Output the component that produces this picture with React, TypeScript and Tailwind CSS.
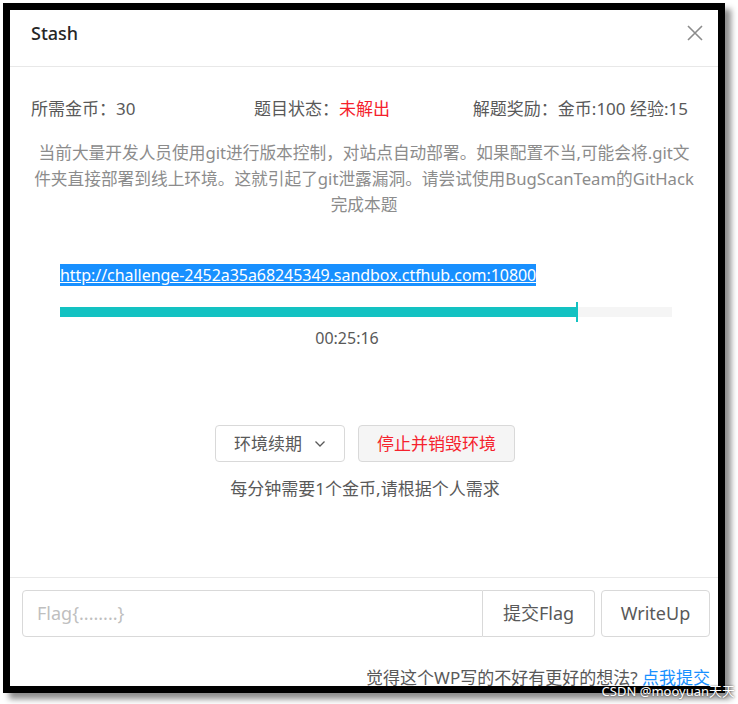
import React from "react";

const F = "font-[family-name:'Noto_Sans','Noto_Sans_CJK_SC',sans-serif]";

export default function App() {
  return (
    <div className={`relative w-[738px] h-[704px] bg-white overflow-hidden ${F}`}>
      <div className="ml-[3px] mt-[3px] w-[722px] h-[690px] border-[7px] border-black bg-white shadow-[6px_6px_6px_rgba(0,0,0,0.45)] overflow-hidden">
        <div className="flex flex-col w-[708px] h-[676px]">
          {/* header */}
          <div className="h-[57px] shrink-0 border-b border-[#e8e8e8] flex items-start justify-between pl-[21px] pr-[14px] pt-[11px]">
            <div className="text-[18px] leading-[24px] font-medium text-[#262626]">Stash</div>
            <svg width="18" height="18" viewBox="0 0 18 18" className="mt-[3px]">
              <path d="M2 2 L16 16 M16 2 L2 16" stroke="#8c8c8c" strokeWidth="1.6" fill="none" />
            </svg>
          </div>

          {/* body */}
          <div className="h-[511px] shrink-0 border-b border-[#e8e8e8] flex flex-col">
            <div className="grid grid-cols-3 pl-[21px] pr-[30px] pt-[30px] text-[17px] leading-[24px] text-[#595959]">
              <div>所需金币：30</div>
              <div className="pl-[4px]">
                题目状态：<span className="text-[#f5222d]">未解出</span>
              </div>
              <div className="text-right">解题奖励：金币:100 经验:15</div>
            </div>

            <div className="mt-[19px] text-center text-[16.7px] leading-[26px] text-[#8c8c8c]">
              <div>当前大量开发人员使用git进行版本控制，对站点自动部署。如果配置不当,可能会将.git文</div>
              <div>件夹直接部署到线上环境。这就引起了git泄露漏洞。请尝试使用BugScanTeam的GitHack</div>
              <div>完成本题</div>
            </div>

            <div className="mt-[46px] pl-[50px] h-[23px] leading-[23px]">
              <span className="bg-[#1890ff] text-white underline text-[16px] tracking-[-0.05px]">
                http://challenge-2452a35a68245349.sandbox.ctfhub.com:10800
              </span>
            </div>

            <div className="mt-[20px] ml-[50px] w-[612px] h-[10px] bg-[#f5f5f5] relative">
              <div className="h-full bg-[#13c2c2]" style={{ width: "84.3%" }} />
              <div className="absolute top-[-5px] h-[20px] w-[2px] bg-[#13c2c2]" style={{ left: "84.3%" }} />
            </div>

            <div className="mt-[11px] pl-[12px] pr-[46px] text-center text-[16px] leading-[20px] text-[#595959]">
              00:25:16
            </div>

            <div className="mt-[77px] flex justify-center gap-[13px] pl-[2px]">
              <button className="h-[37px] w-[130px] rounded-[4px] border border-[#d9d9d9] bg-white flex items-center justify-center gap-[12px] text-[17px] text-[#595959]">
                <span>环境续期</span>
                <svg width="12" height="8" viewBox="0 0 12 8">
                  <path d="M1.5 1.5 L6 6 L10.5 1.5" stroke="#595959" strokeWidth="1.3" fill="none" />
                </svg>
              </button>
              <button className="h-[37px] w-[157px] rounded-[4px] border border-[#d9d9d9] bg-[#f5f5f5] flex items-center justify-center text-[17px] text-[#f5222d]">
                停止并销毁环境
              </button>
            </div>

            <div className="mt-[16px] pl-[2px] text-center text-[17px] leading-[22px] text-[#595959]">
              每分钟需要1个金币,请根据个人需求
            </div>
          </div>

          {/* footer */}
          <div className="pt-[12px] pl-[12px] pr-[8px]">
            <div className="flex gap-[6px] h-[47px]">
              <div className="flex w-[573px] h-full">
                <div className="flex-1 h-full border border-[#d9d9d9] rounded-l-[4px] flex items-center pl-[14px] text-[18px] text-[#bfbfbf]">
                  Flag{"{........}"}
                </div>
                <button className="w-[112px] h-full border border-l-0 border-[#d9d9d9] rounded-r-[4px] bg-white text-[18px] text-[#595959]">
                  提交Flag
                </button>
              </div>
              <button className="w-[109px] h-full border border-[#d9d9d9] rounded-[4px] bg-white text-[18px] text-[#595959]">
                WriteUp
              </button>
            </div>
            <div className="mt-[29px] text-right text-[17px] leading-[24px] text-[#595959]">
              觉得这个WP写的不好有更好的想法? <span className="text-[#1890ff]">点我提交</span>
            </div>
          </div>
        </div>
      </div>

      <div className="absolute right-[3px] top-[683px] text-[13px] leading-[16px] text-white [text-shadow:0_0_2px_rgba(0,0,0,0.7)]">
        CSDN @mooyuan天天
      </div>
    </div>
  );
}
